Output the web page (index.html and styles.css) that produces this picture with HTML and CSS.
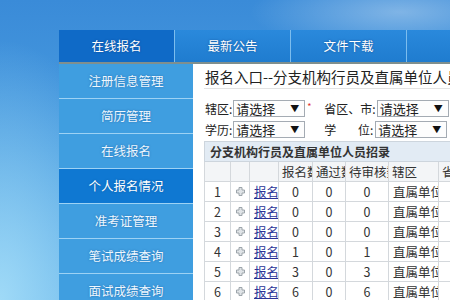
FILE: index.html
```html
<!DOCTYPE html>
<html lang="zh-CN">
<head>
<meta charset="UTF-8">
<title>在线报名</title>
<link rel="stylesheet" href="styles.css">
</head>
<body>
<div class="page">
	<ul class="nav">
		<li class="on">在线报名</li>
		<li>最新公告</li>
		<li>文件下载</li>
		<li></li>
	</ul>
	<div class="main">
		<ul class="side">
			<li>注册信息管理</li>
			<li>简历管理</li>
			<li>在线报名</li>
			<li class="on">个人报名情况</li>
			<li>准考证管理</li>
			<li>笔试成绩查询</li>
			<li>面试成绩查询</li>
		</ul>
		<div class="content">
			<h2 class="title">报名入口--分支机构行员及直属单位人员招录</h2>
			<div class="form">
				<div class="row">
					<label class="lb">辖区:</label>
					<span class="sel">请选择<i>▼</i></span><em>*</em>
					<label class="lb lb2">省区、市:</label>
					<span class="sel">请选择<i>▼</i></span><em>*</em>
				</div>
				<div class="row">
					<label class="lb">学历:</label>
					<span class="sel">请选择<i>▼</i></span><em></em>
					<label class="lb lb2 sp"><span>学</span><span>位:</span></label>
					<span class="sel">请选择<i>▼</i></span><em></em>
				</div>
			</div>
			<table class="list">
				<colgroup>
					<col style="width:26px"><col style="width:19px"><col style="width:29px"><col style="width:34px">
					<col style="width:33px"><col style="width:43px"><col style="width:50px"><col style="width:60px">
				</colgroup>
				<tr class="band"><th colspan="8">分支机构行员及直属单位人员招录</th></tr>
				<tr class="head">
					<td></td><td></td><td></td><td>报名数</td><td>通过数</td><td>待审核数</td><td>辖区</td><td>省区</td>
				</tr>
				<tr><td class="c">1</td><td class="c"><svg class="plus" width="9" height="9" viewBox="0 0 9 9"><path d="M3 0.5h3v2.5h2.5v3H6v2.5H3V6H0.5V3H3z" fill="#dfe3e6" stroke="#9ca4aa" stroke-width="1"/></svg></td><td><a href="#">报名</a></td><td class="c">0</td><td class="c">0</td><td class="c">0</td><td>直属单位</td><td></td></tr>
				<tr><td class="c">2</td><td class="c"><svg class="plus" width="9" height="9" viewBox="0 0 9 9"><path d="M3 0.5h3v2.5h2.5v3H6v2.5H3V6H0.5V3H3z" fill="#dfe3e6" stroke="#9ca4aa" stroke-width="1"/></svg></td><td><a href="#">报名</a></td><td class="c">0</td><td class="c">0</td><td class="c">0</td><td>直属单位</td><td></td></tr>
				<tr><td class="c">3</td><td class="c"><svg class="plus" width="9" height="9" viewBox="0 0 9 9"><path d="M3 0.5h3v2.5h2.5v3H6v2.5H3V6H0.5V3H3z" fill="#dfe3e6" stroke="#9ca4aa" stroke-width="1"/></svg></td><td><a href="#">报名</a></td><td class="c">0</td><td class="c">0</td><td class="c">0</td><td>直属单位</td><td></td></tr>
				<tr><td class="c">4</td><td class="c"><svg class="plus" width="9" height="9" viewBox="0 0 9 9"><path d="M3 0.5h3v2.5h2.5v3H6v2.5H3V6H0.5V3H3z" fill="#dfe3e6" stroke="#9ca4aa" stroke-width="1"/></svg></td><td><a href="#">报名</a></td><td class="c">1</td><td class="c">0</td><td class="c">1</td><td>直属单位</td><td></td></tr>
				<tr><td class="c">5</td><td class="c"><svg class="plus" width="9" height="9" viewBox="0 0 9 9"><path d="M3 0.5h3v2.5h2.5v3H6v2.5H3V6H0.5V3H3z" fill="#dfe3e6" stroke="#9ca4aa" stroke-width="1"/></svg></td><td><a href="#">报名</a></td><td class="c">3</td><td class="c">0</td><td class="c">3</td><td>直属单位</td><td></td></tr>
				<tr><td class="c">6</td><td class="c"><svg class="plus" width="9" height="9" viewBox="0 0 9 9"><path d="M3 0.5h3v2.5h2.5v3H6v2.5H3V6H0.5V3H3z" fill="#dfe3e6" stroke="#9ca4aa" stroke-width="1"/></svg></td><td><a href="#">报名</a></td><td class="c">6</td><td class="c">0</td><td class="c">6</td><td>直属单位</td><td></td></tr>
			</table>
		</div>
	</div>
</div>
</body>
</html>
```
FILE: styles.css
```css
*{margin:0;padding:0;list-style:none;box-sizing:border-box;}
body{width:450px;height:300px;overflow:hidden;font-family:"Noto Sans CJK SC","Liberation Sans",sans-serif;
	background:
		radial-gradient(ellipse 150px 40px at 400px 12px,rgba(255,255,255,.35),transparent),
		radial-gradient(ellipse 140px 260px at 0 300px,rgba(170,225,250,.85),transparent),
		linear-gradient(#3a8bd8,#4a9de0 50%,#62b1e8);}
.page{padding:30px 0 0 59px;width:560px;}
.nav{display:flex;height:34px;border-bottom:2px solid #7f8f8e;
	background:linear-gradient(#2a89dc,#1f7ccf);}
.nav li{width:116px;flex:none;border-right:1px solid #7cbdee;color:#fff;font-size:12.5px;
	line-height:32px;text-align:center;text-shadow:0 0 2px rgba(0,40,100,.6);}
.nav li.on{background:#0f6ac7;}
.main{display:flex;}
.side{width:134px;flex:none;background:#3f9ee0;}
.side li{height:35px;line-height:34px;border-bottom:1px solid #9dd2f4;color:#eef7ff;font-size:12.5px;
	text-align:center;text-shadow:0 0 2px rgba(0,60,120,.5);}
.side li.on{background:#0f78d2;color:#fff;}
.content{width:300px;height:240px;background:#fff;padding-left:11px;color:#222;}
.title{font-size:14.5px;font-weight:normal;line-height:22px;padding:2px 0 0 1px;border-bottom:1px solid #e3e3e3;
	white-space:nowrap;overflow:hidden;width:290px;}
.form{margin-top:9px;}
.row{display:flex;align-items:center;height:21px;font-size:13px;padding-left:1px;}
.lb{flex:none;white-space:nowrap;font-size:12px;margin-right:1px;}
.lb2.sp{width:50px;display:flex;justify-content:space-between;padding-right:1px;}
.sel{display:flex;align-items:center;justify-content:space-between;width:72px;height:17px;flex:none;
	border:1px solid #a4abb3;background:#fdfdfd;padding:0 5px 0 2px;font-size:13px;line-height:15px;}
.sel i{font-style:normal;font-size:9px;color:#111;}
.row em{width:19px;flex:none;align-self:flex-start;color:#e03030;font-style:normal;font-size:9px;padding:2px 0 0 2px;}
.list{border-collapse:collapse;table-layout:fixed;width:294px;margin-top:1px;font-size:12.5px;color:#333;}
.list td,.list th{border:1px solid #d4d8dc;height:20px;padding:0 0 0 4px;white-space:nowrap;overflow:hidden;text-align:left;}
.list .band th{background:#e2ebf4;font-weight:bold;font-size:12px;color:#333;padding-left:5px;border-color:#cdd5dd;}
.list .head td{background:#f3f5f7;padding-left:3px;}
.list td.c{text-align:center;padding:0;}
.list a{color:#2a3497;text-decoration:underline;}
.plus{display:block;margin:0 auto;}
```
